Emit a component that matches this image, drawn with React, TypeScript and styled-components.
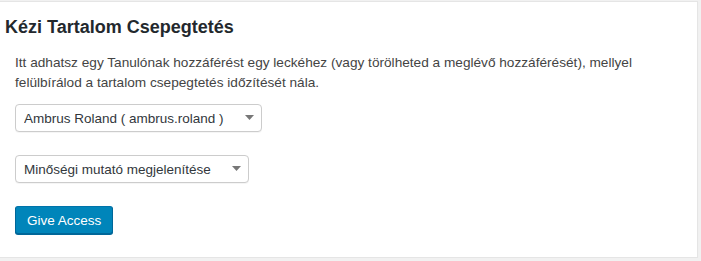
import React from 'react';
import styled, { createGlobalStyle } from 'styled-components';

// Style
const GlobalStyle = createGlobalStyle`
  html, body {
    margin: 0;
    padding: 0;
    background: #f1f1f1;
  }
  body {
    font-family: "Liberation Sans", Arial, sans-serif;
    color: #444;
    font-size: 13px;
  }
`;

const Panel = styled.div`
  box-sizing: border-box;
  width: 699px;
  height: 257px;
  margin: 1px 0 0 -1px;
  background: #fff;
  border: 1px solid #e5e5e5;
  box-shadow: 0 1px 1px rgba(0, 0, 0, 0.04);
`;

const Title = styled.h2`
  margin: 0;
  padding: 13px 0 0 5px;
  font-size: 18px;
  line-height: 24px;
  font-weight: 700;
  color: #23282d;
`;

const Body = styled.div`
  padding: 14px 12px 0 15px;
`;

const Intro = styled.p`
  margin: 0 0 12px;
  font-size: 13.65px;
  line-height: 19.5px;
  color: #444;
`;

const Field = styled.div<{ $width: number }>`
  position: relative;
  width: ${(p) => p.$width}px;
  margin: 0 0 23px;
`;

const Select = styled.select`
  box-sizing: border-box;
  display: block;
  width: 100%;
  height: 28px;
  padding: 0 24px 0 8px;
  appearance: none;
  -webkit-appearance: none;
  background: #fff;
  border: 1px solid #ccc;
  border-radius: 4px;
  box-shadow: 0 1px 0 rgba(0, 0, 0, 0.04);
  font-family: "Liberation Sans", Arial, sans-serif;
  font-size: 13.5px;
  color: #32373c;
`;

const Caret = styled.svg`
  position: absolute;
  right: 8px;
  top: 11px;
  pointer-events: none;
`;

const Button = styled.button`
  box-sizing: border-box;
  display: block;
  height: 28px;
  padding: 0 11px;
  background: #0085ba;
  border: 1px solid #0073aa;
  border-color: #0073aa #006799 #006799;
  border-radius: 3px;
  box-shadow: 0 1px 0 #006799;
  color: #fff;
  font-family: "Liberation Sans", Arial, sans-serif;
  font-size: 13.5px;
  cursor: pointer;
`;

// Component
function Dropdown({ width, value }: { width: number; value: string }) {
  return (
    <Field $width={width}>
      <Select defaultValue={value}>
        <option>{value}</option>
      </Select>
      <Caret width="9" height="5" viewBox="0 0 9 5">
        <polygon points="0,0 9,0 4.5,5" fill="#777" />
      </Caret>
    </Field>
  );
}

function App() {
  return (
    <>
      <GlobalStyle />
      <Panel>
        <Title>Kézi Tartalom Csepegtetés</Title>
        <Body>
          <Intro>
            Itt adhatsz egy Tanulónak hozzáférést egy leckéhez (vagy törölheted a meglévő hozzáférését), mellyel
            felülbírálod a tartalom csepegtetés időzítését nála.
          </Intro>
          <Dropdown width={247} value="Ambrus Roland ( ambrus.roland )" />
          <Dropdown width={234} value="Minőségi mutató megjelenítése" />
          <Button>Give Access</Button>
        </Body>
      </Panel>
    </>
  );
}

export default App;
